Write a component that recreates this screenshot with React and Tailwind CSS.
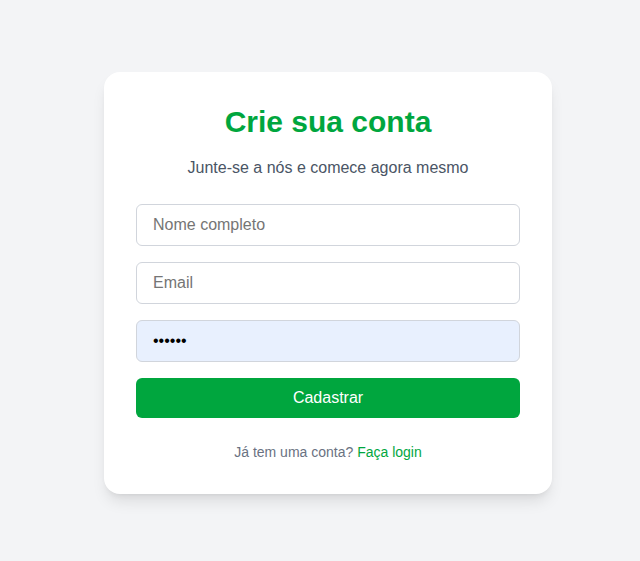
export default function App() {
  return (
    <div
      className="min-h-screen bg-gray-100 flex items-center justify-center pl-4 pt-[5px]"
      style={{ fontFamily: '"Liberation Sans", Arial, sans-serif' }}
    >
      <div className="w-[448px] bg-white rounded-2xl shadow-lg p-8">
        <h1 className="text-3xl font-bold text-green-600 text-center mb-4">Crie sua conta</h1>
        <p className="text-gray-600 text-center mb-6">Junte-se a nós e comece agora mesmo</p>
        <form className="flex flex-col gap-4" onSubmit={(e) => e.preventDefault()}>
          <input
            type="text"
            placeholder="Nome completo"
            className="w-full px-4 py-2 border border-gray-300 rounded-md text-base placeholder-[#757575] outline-none"
          />
          <input
            type="email"
            placeholder="Email"
            className="w-full px-4 py-2 border border-gray-300 rounded-md text-base placeholder-[#757575] outline-none"
          />
          <input
            type="password"
            defaultValue="123456"
            className="w-full px-4 py-2 border border-gray-300 rounded-md text-base bg-[#e8f0fe] text-black outline-none"
          />
          <button
            type="submit"
            className="w-full py-2 bg-green-600 text-white rounded-md text-base"
          >
            Cadastrar
          </button>
        </form>
        <p className="text-sm text-gray-500 text-center mt-6">
          Já tem uma conta? <a href="#" className="text-green-600">Faça login</a>
        </p>
      </div>
    </div>
  )
}
